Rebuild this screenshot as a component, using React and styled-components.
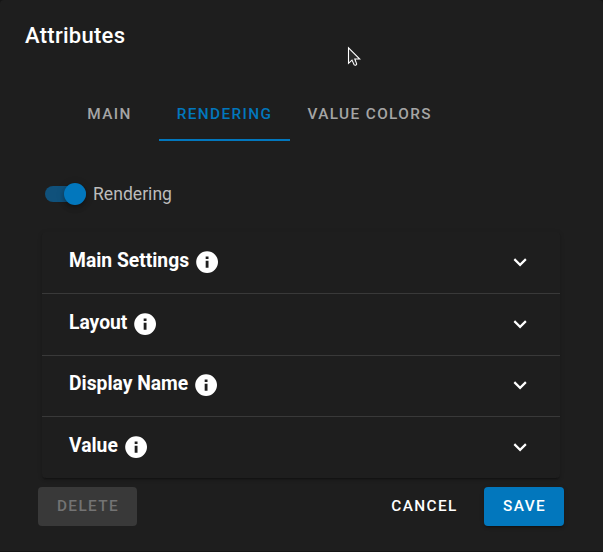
import React from "react";
import styled, { createGlobalStyle } from "styled-components";

const Global = createGlobalStyle`
  *, *::before, *::after { box-sizing: border-box; }
  body { margin: 0; background: #151515; font-family: Roboto, sans-serif; overflow: hidden; }
  button { font-family: inherit; border: 0; background: none; padding: 0; margin: 0; }
`;

const Dialog = styled.main`
  position: relative;
  width: 603px;
  height: 551px;
  background: #1e1e1e;
  border-radius: 4px 4px 0 0;
  color: #fff;
  display: flex;
  flex-direction: column;
`;

const Title = styled.h1`
  margin: 0;
  height: 87px;
  padding: 18px 25px 0;
  font-size: 22px;
  line-height: 35px;
  font-weight: 500;
  letter-spacing: 0.0125em;
`;

const Tabs = styled.nav`
  display: flex;
  height: 54px;
  padding-left: 60px;
`;

const Tab = styled.button`
  width: ${(p) => p.$width}px;
  padding-top: 2px;
  border-bottom: 2px solid ${(p) => (p.$active ? "#0277bd" : "transparent")};
  color: ${(p) => (p.$active ? "#0277bd" : "#a5a5a5")};
  font-size: 15.35px;
  font-weight: 500;
  letter-spacing: 0.0892857em;
  white-space: nowrap;
`;

const SwitchRow = styled.label`
  display: flex;
  align-items: center;
  height: 26px;
  margin: 40px 0 0 45px;
  gap: 7px;
  font-size: 17.6px;
  color: #bcbcbc;
`;

const Track = styled.span`
  display: flex;
  align-items: center;
  justify-content: flex-end;
  width: 41px;
  height: 16px;
  border-radius: 8px;
  background: #10517b;
`;

const Thumb = styled.span`
  width: 22px;
  height: 22px;
  border-radius: 50%;
  background: #0277bd;
  box-shadow: 0 2px 4px -1px rgba(0, 0, 0, 0.2), 0 4px 5px rgba(0, 0, 0, 0.14),
    0 1px 10px rgba(0, 0, 0, 0.12);
`;

const Panels = styled.section`
  width: 518px;
  margin: 25px 0 0 42px;
  border-radius: 4px;
  box-shadow: 0 3px 1px -2px rgba(0, 0, 0, 0.2), 0 2px 2px rgba(0, 0, 0, 0.14),
    0 1px 5px rgba(0, 0, 0, 0.12);
`;

const Panel = styled.div`
  display: flex;
  align-items: center;
  height: ${(p) => p.$height}px;
  padding: 0 27px ${(p) => p.$bottom || 0}px;
  & + & { border-top: 1px solid #393939; }
`;

const PanelTitle = styled.h2`
  margin: 0;
  padding-bottom: 3px;
  flex: 1;
  display: flex;
  align-items: center;
  gap: 5px;
  font-size: 19.3px;
  line-height: 24px;
  font-weight: 700;
`;

const Icon = styled.svg`
  display: block;
  width: 26.2px;
  height: 26.2px;
  fill: #fff;
  flex: none;
`;

const InfoMark = styled(Icon)`
  margin: ${(p) => (p.$low ? "4px 0 0" : "3px 0 1px")};
`;

const Actions = styled.footer`
  display: flex;
  align-items: center;
  padding: 0 39px 0 38px;
  margin-top: 9px;
`;

const Button = styled.button`
  height: 39px;
  width: ${(p) => p.$width}px;
  padding: 0 0 2px 1px;
  border-radius: 4px;
  font-size: 15.35px;
  font-weight: 500;
  letter-spacing: 0.0892857em;
  color: ${(p) => (p.$kind === "disabled" ? "#737373" : "#fff")};
  background: ${(p) =>
    p.$kind === "disabled" ? "#393939" : p.$kind === "primary" ? "#0277bd" : "transparent"};
  box-shadow: ${(p) =>
    p.$kind === "primary"
      ? "0 3px 1px -2px rgba(0,0,0,.2), 0 2px 2px rgba(0,0,0,.14), 0 1px 5px rgba(0,0,0,.12)"
      : "none"};
`;

const CancelButton = styled(Button)`
  margin: 0 9px 0 auto;
`;

const Pointer = styled.svg`
  position: absolute;
  left: 347px;
  top: 46px;
  width: 14px;
  height: 21px;
`;

const panels = [
  { title: "Main Settings", height: 61 },
  { title: "Layout", height: 62 },
  { title: "Display Name", height: 61, bottom: 2, lowMark: true },
  { title: "Value", height: 62 },
];

export default function App() {
  return (
    <>
      <Global />
      <Dialog>
        <Title>Attributes</Title>
        <Tabs>
          <Tab $width={99}>MAIN</Tab>
          <Tab $width={131} $active>RENDERING</Tab>
          <Tab $width={159.4}>VALUE COLORS</Tab>
        </Tabs>
        <SwitchRow>
          <Track><Thumb /></Track>
          Rendering
        </SwitchRow>
        <Panels>
          {panels.map((p) => (
            <Panel key={p.title} $height={p.height} $bottom={p.bottom}>
              <PanelTitle>
                {p.title}
                <InfoMark viewBox="0 0 24 24" $low={p.lowMark}>
                  <path d="M13.3,9.1H10.7V6.8H13.3M13.3,17.2H10.7V10.8H13.3M12,2A10,10 0 0,0 2,12A10,10 0 0,0 12,22A10,10 0 0,0 22,12A10,10 0 0,0 12,2Z" />
                </InfoMark>
              </PanelTitle>
              <Icon viewBox="0 0 24 24">
                <path d="M7.41,8.58L12,13.17L16.59,8.58L18,10L12,16L6,10L7.41,8.58Z" />
              </Icon>
            </Panel>
          ))}
        </Panels>
        <Actions>
          <Button $width={99} $kind="disabled">DELETE</Button>
          <CancelButton $width={102}>CANCEL</CancelButton>
          <Button $width={80} $kind="primary">SAVE</Button>
        </Actions>
        <Pointer viewBox="0 0 14 21">
          <path
            d="M1.5 1.8V17.3L5 14.1L7.2 18.9Q8.8 19.9 9.7 17.9L7.8 13H12.8Z"
            fill="#2a2a2a"
            stroke="#fff"
            strokeWidth="1.1"
          />
        </Pointer>
      </Dialog>
    </>
  );
}
